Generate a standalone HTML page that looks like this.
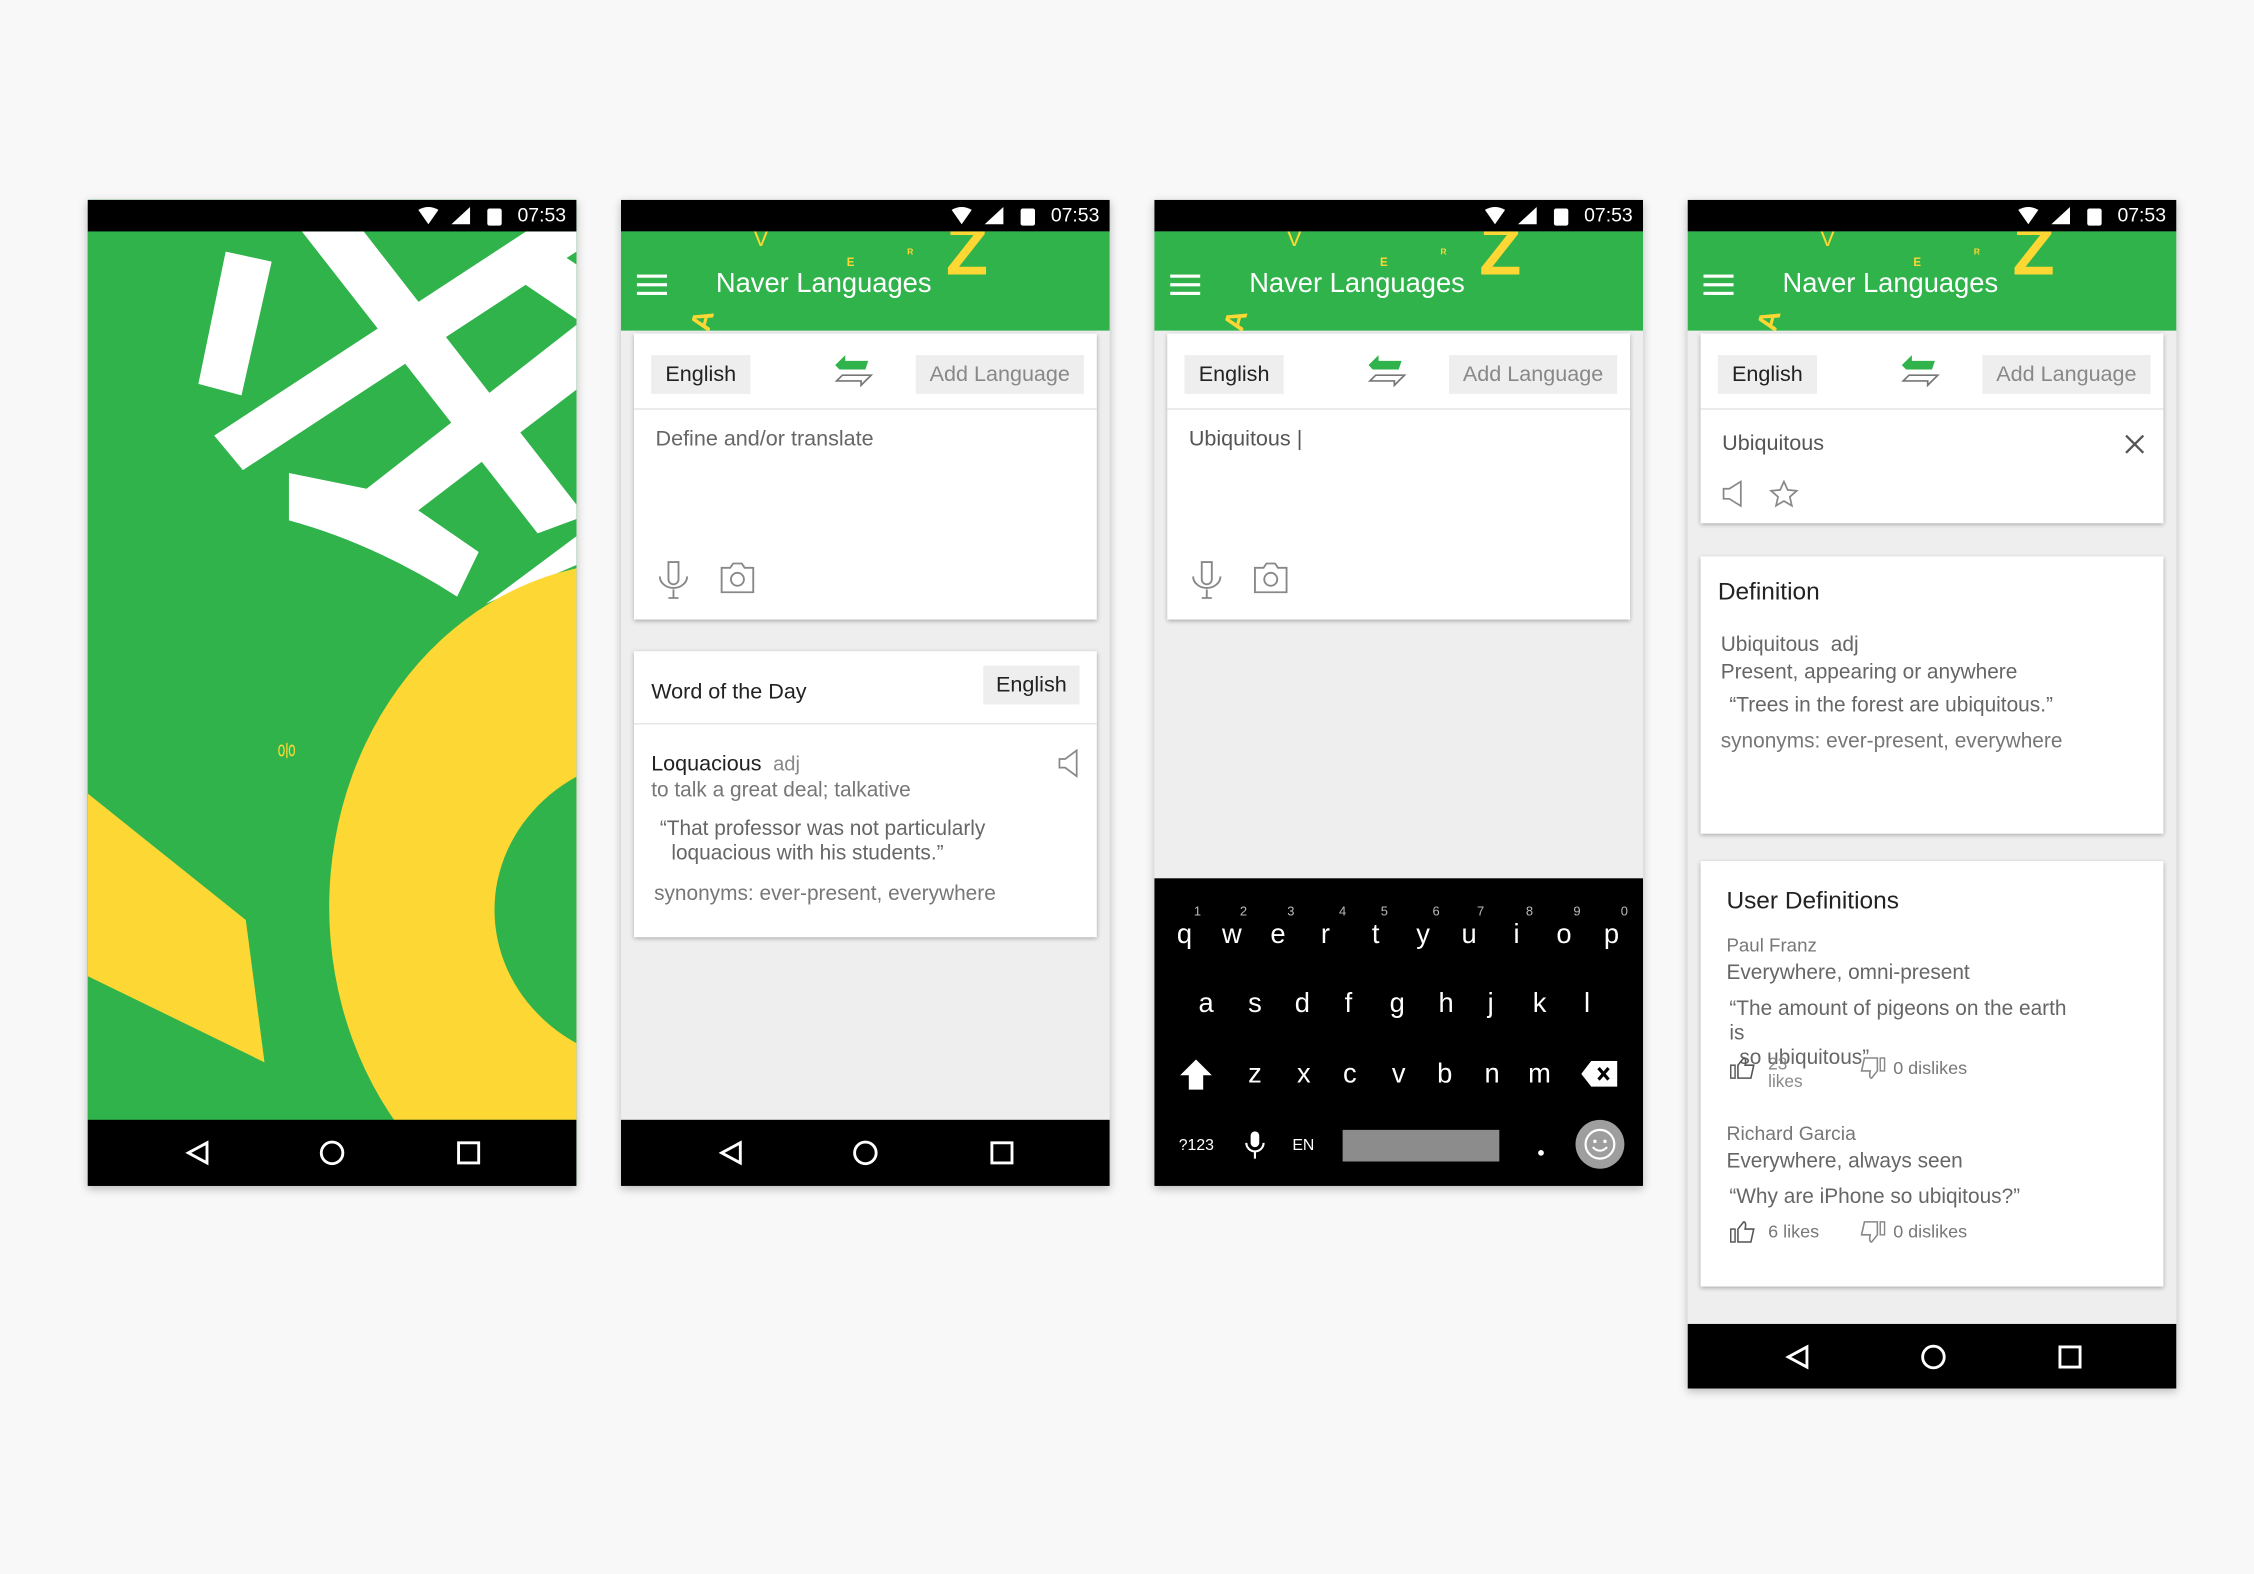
<!DOCTYPE html>
<html><head><meta charset="utf-8">
<style>
*{margin:0;padding:0;box-sizing:border-box}
html,body{width:2254px;height:1574px;overflow:hidden;background:#f8f8f8}
#w{position:absolute;left:0;top:0;width:1568px;height:1095px;transform:scale(1.4375);transform-origin:0 0;font-family:"Liberation Sans","Noto Sans CJK KR",sans-serif}
.ph{position:absolute;top:139px;width:340px;height:686px;background:#eeeeee;overflow:hidden;box-shadow:0 2px 6px rgba(0,0,0,.25)}
.sb{position:absolute;left:0;top:0;width:340px;height:22px;background:#000}
.sb .tm{position:absolute;left:299px;top:3px;color:#fff;font-size:13.5px;line-height:16px}
.nav{position:absolute;left:0;width:340px;height:46px;background:#000}
.hd{position:absolute;left:0;top:22px;width:340px;height:69px;background:#2fb34a;overflow:hidden}
.ttl{position:absolute;left:66px;top:26px;color:#fff;font-size:19px;line-height:22px}
.y{position:absolute;color:#fdd835;font-weight:bold;line-height:1}
.card{position:absolute;left:9px;width:322px;background:#fff;box-shadow:0 1px 3px rgba(0,0,0,.3)}
.chip{position:absolute;height:27px;background:#eeeeee;font-size:15px;line-height:27px;text-align:center;color:#222}
.t{position:absolute;white-space:nowrap;line-height:20px}
.dv{position:absolute;left:0;right:0;height:1px;background:#e4e4e4}
.k{position:absolute;color:#fff;font-size:19px;line-height:20px;width:20px;text-align:center}
.n{position:absolute;color:#bbb;font-size:9px;line-height:10px;width:10px;text-align:center}
.ct{font-size:14.5px}
</style></head><body><div id="w">

<!-- PHONE 1 -->
<div class="ph" style="left:61px;background:#2fb34a">
 <svg style="position:absolute;left:0;top:22px" width="340" height="618" viewBox="0 0 340 618">
  <rect width="340" height="618" fill="#2fb34a"/>
  <polygon fill="#fff" points="96,14 128,21 107,114 77,106"/>
  <polygon fill="#fff" points="88,142 305,0 340,0 340,14 108,166"/>
  <polygon fill="#fff" points="149,0 192,0 340,190 340,200 313,210"/>
  <path fill="#fff" d="M140,168 L194,179 L340,65 L340,110 L230,194 L272,223 L257,254 Q199,217 140,201 Z"/>
  <polygon fill="#fff" points="303,36 331,17 340,23 340,61"/>
  <polygon fill="#fff" points="340,212 340,232 277,259"/>
  <ellipse cx="380" cy="470" rx="212" ry="240" fill="#fdd835"/>
  <ellipse cx="400" cy="472" rx="117" ry="108" fill="#2fb34a"/>
  <polygon fill="#fdd835" points="0,391 110,479 123,578 0,518"/>
  <text x="132" y="366" font-size="13" fill="#fdd835" transform="rotate(-90 138 361)" font-family="Noto Sans CJK KR,sans-serif">응</text>
 </svg>
 <div class="sb"><svg style="position:absolute;left:228px;top:4px" width="64" height="14"><path d="M2,3 Q9,-1 16,3 L9,13Z" fill="#fff"/><path d="M25,13 L38,1 L38,13Z" fill="#fff"/><rect x="50" y="2" width="10" height="12" rx="1.5" fill="#fff"/></svg><div class="tm">07:53</div></div>
 <div class="nav" style="top:640px"><svg width="340" height="46"><path d="M83,16 L70,23 L83,30Z" fill="none" stroke="#fff" stroke-width="2"/><circle cx="170" cy="23" r="7.5" fill="none" stroke="#fff" stroke-width="2"/><rect x="258" y="16" width="14" height="14" fill="none" stroke="#fff" stroke-width="2"/></svg></div>
</div>

<!-- PHONE 2 -->
<div class="ph" style="left:432px">
 <div class="sb"><svg style="position:absolute;left:228px;top:4px" width="64" height="14"><path d="M2,3 Q9,-1 16,3 L9,13Z" fill="#fff"/><path d="M25,13 L38,1 L38,13Z" fill="#fff"/><rect x="50" y="2" width="10" height="12" rx="1.5" fill="#fff"/></svg><div class="tm">07:53</div></div>
 <div class="hd">
  <svg style="position:absolute;left:11px;top:29px" width="21" height="16"><rect y="1" width="21" height="2.2" fill="#fff"/><rect y="7" width="21" height="2.2" fill="#fff"/><rect y="13" width="21" height="2.2" fill="#fff"/></svg>
  <div class="ttl">Naver Languages</div>
  <div class="y" style="left:92px;top:-2px;font-size:16px;font-weight:normal">V</div>
  <div class="y" style="left:157px;top:18px;font-size:8px">E</div>
  <div class="y" style="left:199px;top:12px;font-size:6px">R</div>
  <div class="y" style="left:226px;top:-9px;font-size:48px">Z</div>
  <div class="y" style="left:50px;top:52px;font-size:20px;transform:rotate(-75deg)">A</div>
 </div>
 <div class="card" style="top:93px;height:199px">
  <div class="chip" style="left:12px;top:15px;width:69px">English</div>
  <svg style="position:absolute;left:139px;top:14px" width="28" height="24"><path d="M1,8 L8,1 L8,5 L24,5 L22,11 L4,11Z" fill="#2fb34a"/><path d="M6,15 L26,15 L19,22 L19,19 L2,19Z" fill="none" stroke="#777" stroke-width="1.2"/></svg>
  <div class="chip" style="left:196px;top:15px;width:117px;color:#888">Add Language</div>
  <div class="dv" style="top:52px"></div>
  <div class="t" style="left:15px;top:64px;font-size:15px;color:#666">Define and/or translate</div>
  <svg style="position:absolute;left:16px;top:157px" width="80" height="30"><path d="M8,2 h7 v12 a3.5,3.5 0 0 1 -7,0Z M2,12 a9.5,8 0 0 0 19,0 M11.5,21 v6 M8,27 h7" fill="none" stroke="#888" stroke-width="1.3"/><path d="M45,6 h6 l2,-3 h6 l2,3 h6 v17 h-22Z" fill="none" stroke="#888" stroke-width="1.3"/><circle cx="56" cy="14" r="4.5" fill="none" stroke="#888" stroke-width="1.3"/></svg>
 </div>
 <div class="card" style="top:314px;height:199px">
  <div class="t" style="left:12px;top:19px;font-size:15px;color:#222">Word of the Day</div>
  <div class="chip" style="left:243px;top:10px;width:67px">English</div>
  <div class="dv" style="top:50px"></div>
  <div class="t" style="left:12px;top:68px;font-size:15px;color:#222">Loquacious <span style="color:#888;font-size:14px">&nbsp;adj</span></div>
  <div class="t ct" style="left:12px;top:87px;color:#777">to talk a great deal; talkative</div>
  <div class="t ct" style="left:18px;top:114px;color:#666">“That professor was not particularly</div>
  <div class="t ct" style="left:26px;top:131px;color:#666">loquacious with his students.”</div>
  <div class="t ct" style="left:14px;top:159px;color:#777">synonyms: ever-present, everywhere</div>
  <svg style="position:absolute;left:294px;top:68px" width="16" height="20"><path d="M2,7 h4 l8,-6 v18 l-8,-6 h-4Z" fill="none" stroke="#888" stroke-width="1.2"/></svg>
 </div>
 <div class="nav" style="top:640px"><svg width="340" height="46"><path d="M83,16 L70,23 L83,30Z" fill="none" stroke="#fff" stroke-width="2"/><circle cx="170" cy="23" r="7.5" fill="none" stroke="#fff" stroke-width="2"/><rect x="258" y="16" width="14" height="14" fill="none" stroke="#fff" stroke-width="2"/></svg></div>
</div>

<!-- PHONE 3 -->
<div class="ph" style="left:803px">
 <div class="sb"><svg style="position:absolute;left:228px;top:4px" width="64" height="14"><path d="M2,3 Q9,-1 16,3 L9,13Z" fill="#fff"/><path d="M25,13 L38,1 L38,13Z" fill="#fff"/><rect x="50" y="2" width="10" height="12" rx="1.5" fill="#fff"/></svg><div class="tm">07:53</div></div>
 <div class="hd">
  <svg style="position:absolute;left:11px;top:29px" width="21" height="16"><rect y="1" width="21" height="2.2" fill="#fff"/><rect y="7" width="21" height="2.2" fill="#fff"/><rect y="13" width="21" height="2.2" fill="#fff"/></svg>
  <div class="ttl">Naver Languages</div>
  <div class="y" style="left:92px;top:-2px;font-size:16px;font-weight:normal">V</div>
  <div class="y" style="left:157px;top:18px;font-size:8px">E</div>
  <div class="y" style="left:199px;top:12px;font-size:6px">R</div>
  <div class="y" style="left:226px;top:-9px;font-size:48px">Z</div>
  <div class="y" style="left:50px;top:52px;font-size:20px;transform:rotate(-75deg)">A</div>
 </div>
 <div class="card" style="top:93px;height:199px">
  <div class="chip" style="left:12px;top:15px;width:69px">English</div>
  <svg style="position:absolute;left:139px;top:14px" width="28" height="24"><path d="M1,8 L8,1 L8,5 L24,5 L22,11 L4,11Z" fill="#2fb34a"/><path d="M6,15 L26,15 L19,22 L19,19 L2,19Z" fill="none" stroke="#777" stroke-width="1.2"/></svg>
  <div class="chip" style="left:196px;top:15px;width:117px;color:#888">Add Language</div>
  <div class="dv" style="top:52px"></div>
  <div class="t" style="left:15px;top:64px;font-size:15px;color:#555">Ubiquitous |</div>
  <svg style="position:absolute;left:16px;top:157px" width="80" height="30"><path d="M8,2 h7 v12 a3.5,3.5 0 0 1 -7,0Z M2,12 a9.5,8 0 0 0 19,0 M11.5,21 v6 M8,27 h7" fill="none" stroke="#888" stroke-width="1.3"/><path d="M45,6 h6 l2,-3 h6 l2,3 h6 v17 h-22Z" fill="none" stroke="#888" stroke-width="1.3"/><circle cx="56" cy="14" r="4.5" fill="none" stroke="#888" stroke-width="1.3"/></svg>
 </div>
 <div style="position:absolute;left:0;top:472px;width:340px;height:214px;background:#000">
  <div class="n" style="left:25px;top:18px">1</div><div class="n" style="left:57px;top:18px">2</div><div class="n" style="left:90px;top:18px">3</div><div class="n" style="left:126px;top:18px">4</div><div class="n" style="left:155px;top:18px">5</div><div class="n" style="left:191px;top:18px">6</div><div class="n" style="left:222px;top:18px">7</div><div class="n" style="left:256px;top:18px">8</div><div class="n" style="left:289px;top:18px">9</div><div class="n" style="left:322px;top:18px">0</div>
  <div class="k" style="left:11px;top:30px">q</div><div class="k" style="left:44px;top:30px">w</div><div class="k" style="left:76px;top:30px">e</div><div class="k" style="left:109px;top:30px">r</div><div class="k" style="left:144px;top:30px">t</div><div class="k" style="left:177px;top:30px">y</div><div class="k" style="left:209px;top:30px">u</div><div class="k" style="left:242px;top:30px">i</div><div class="k" style="left:275px;top:30px">o</div><div class="k" style="left:308px;top:30px">p</div>
  <div class="k" style="left:26px;top:78px">a</div><div class="k" style="left:60px;top:78px">s</div><div class="k" style="left:93px;top:78px">d</div><div class="k" style="left:125px;top:78px">f</div><div class="k" style="left:159px;top:78px">g</div><div class="k" style="left:193px;top:78px">h</div><div class="k" style="left:224px;top:78px">j</div><div class="k" style="left:258px;top:78px">k</div><div class="k" style="left:291px;top:78px">l</div>
  <svg style="position:absolute;left:17px;top:125px" width="24" height="24"><path d="M12,1 L23,12 L17,12 L17,22 L7,22 L7,12 L1,12Z" fill="#fff"/></svg>
  <div class="k" style="left:60px;top:127px">z</div><div class="k" style="left:94px;top:127px">x</div><div class="k" style="left:126px;top:127px">c</div><div class="k" style="left:160px;top:127px">v</div><div class="k" style="left:192px;top:127px">b</div><div class="k" style="left:225px;top:127px">n</div><div class="k" style="left:258px;top:127px">m</div>
  <svg style="position:absolute;left:297px;top:127px" width="26" height="18"><path d="M7,0 H25 V18 H7 L0,9Z" fill="#fff"/><path d="M12,5 L19,13 M19,5 L12,13" stroke="#000" stroke-width="2.2"/></svg>
  <div class="t" style="left:17px;top:176px;color:#fff;font-size:11px">?123</div>
  <svg style="position:absolute;left:63px;top:175px" width="14" height="22"><rect x="4" y="1" width="6" height="11" rx="3" fill="#fff"/><path d="M1,9 a6,6 0 0 0 12,0 M7,15 v5" fill="none" stroke="#fff" stroke-width="1.5"/></svg>
  <div class="t" style="left:96px;top:176px;color:#fff;font-size:11px">EN</div>
  <div style="position:absolute;left:131px;top:175px;width:109px;height:22px;background:#8c8c8c"></div>
  <div style="position:absolute;left:267px;top:189px;width:4px;height:4px;border-radius:2px;background:#fff"></div>
  <div style="position:absolute;left:293px;top:168px;width:34px;height:34px;border-radius:17px;background:#9e9e9e"></div>
  <svg style="position:absolute;left:298px;top:173px" width="24" height="24"><circle cx="12" cy="12" r="10" fill="none" stroke="#fff" stroke-width="1.5"/><circle cx="8.5" cy="10" r="1.2" fill="#fff"/><circle cx="15.5" cy="10" r="1.2" fill="#fff"/><path d="M7,14 q5,5 10,0" fill="none" stroke="#fff" stroke-width="1.5"/></svg>
 </div>
</div>

<!-- PHONE 4 -->
<div class="ph" style="left:1174px;height:827px">
 <div class="sb"><svg style="position:absolute;left:228px;top:4px" width="64" height="14"><path d="M2,3 Q9,-1 16,3 L9,13Z" fill="#fff"/><path d="M25,13 L38,1 L38,13Z" fill="#fff"/><rect x="50" y="2" width="10" height="12" rx="1.5" fill="#fff"/></svg><div class="tm">07:53</div></div>
 <div class="hd">
  <svg style="position:absolute;left:11px;top:29px" width="21" height="16"><rect y="1" width="21" height="2.2" fill="#fff"/><rect y="7" width="21" height="2.2" fill="#fff"/><rect y="13" width="21" height="2.2" fill="#fff"/></svg>
  <div class="ttl">Naver Languages</div>
  <div class="y" style="left:92px;top:-2px;font-size:16px;font-weight:normal">V</div>
  <div class="y" style="left:157px;top:18px;font-size:8px">E</div>
  <div class="y" style="left:199px;top:12px;font-size:6px">R</div>
  <div class="y" style="left:226px;top:-9px;font-size:48px">Z</div>
  <div class="y" style="left:50px;top:52px;font-size:20px;transform:rotate(-75deg)">A</div>
 </div>
 <div class="card" style="top:93px;height:132px">
  <div class="chip" style="left:12px;top:15px;width:69px">English</div>
  <svg style="position:absolute;left:139px;top:14px" width="28" height="24"><path d="M1,8 L8,1 L8,5 L24,5 L22,11 L4,11Z" fill="#2fb34a"/><path d="M6,15 L26,15 L19,22 L19,19 L2,19Z" fill="none" stroke="#777" stroke-width="1.2"/></svg>
  <div class="chip" style="left:196px;top:15px;width:117px;color:#888">Add Language</div>
  <div class="dv" style="top:52px"></div>
  <div class="t" style="left:15px;top:67px;font-size:15px;color:#555">Ubiquitous</div>
  <svg style="position:absolute;left:295px;top:70px" width="14" height="14"><path d="M1,1 L13,13 M13,1 L1,13" stroke="#555" stroke-width="1.6"/></svg>
  <svg style="position:absolute;left:14px;top:102px" width="60" height="20"><path d="M2,6 h4 l8,-5 v17 l-8,-5 h-4Z" fill="none" stroke="#888" stroke-width="1.2"/><path d="M44,1 l2.6,5.8 6.3,.6 -4.8,4.2 1.4,6.2 -5.5,-3.3 -5.5,3.3 1.4,-6.2 -4.8,-4.2 6.3,-.6Z" fill="none" stroke="#888" stroke-width="1.2"/></svg>
 </div>
 <div class="card" style="top:248px;height:193px">
  <div class="t" style="left:12px;top:15px;font-size:17px;color:#222">Definition</div>
  <div class="t ct" style="left:14px;top:52px;color:#666">Ubiquitous &nbsp;adj</div>
  <div class="t ct" style="left:14px;top:71px;color:#666">Present, appearing or anywhere</div>
  <div class="t ct" style="left:20px;top:94px;color:#666">“Trees in the forest are ubiquitous.”</div>
  <div class="t ct" style="left:14px;top:119px;color:#777">synonyms: ever-present, everywhere</div>
 </div>
 <div class="card" style="top:460px;height:296px">
  <div class="t" style="left:18px;top:18px;font-size:17px;color:#222">User Definitions</div>
  <div class="t" style="left:18px;top:49px;font-size:13px;color:#777">Paul Franz</div>
  <div class="t ct" style="left:18px;top:68px;color:#666">Everywhere, omni-present</div>
  <div class="t ct" style="left:20px;top:93px;color:#666">“The amount of pigeons on the earth</div>
  <div class="t ct" style="left:20px;top:110px;color:#666">is</div>
  <div class="t ct" style="left:27px;top:127px;color:#666">so ubiquitous”</div>
  <svg style="position:absolute;left:20px;top:136px" width="20" height="16"><rect x="1" y="6" width="3" height="9" fill="none" stroke="#555" stroke-width="1"/><path d="M6,6 L10,1 Q12,1 11,6 H17 L15,15 H6Z" fill="none" stroke="#555" stroke-width="1.1"/></svg>
  <div class="t" style="left:47px;top:135px;font-size:12px;color:#888;line-height:12px">23<br>likes</div>
  <svg style="position:absolute;left:110px;top:136px" width="20" height="16"><rect x="15" y="1" width="3" height="9" fill="none" stroke="#888" stroke-width="1"/><path d="M13,10 L9,15 Q7,15 8,10 H2 L4,1 H13Z" fill="none" stroke="#888" stroke-width="1.1"/></svg>
  <div class="t" style="left:134px;top:134px;font-size:12.5px;color:#777">0 dislikes</div>
  <div class="t" style="left:18px;top:180px;font-size:13.5px;color:#777">Richard Garcia</div>
  <div class="t ct" style="left:18px;top:199px;color:#666">Everywhere, always seen</div>
  <div class="t ct" style="left:20px;top:224px;color:#666">“Why are iPhone so ubiqitous?”</div>
  <svg style="position:absolute;left:20px;top:250px" width="20" height="16"><rect x="1" y="6" width="3" height="9" fill="none" stroke="#555" stroke-width="1"/><path d="M6,6 L10,1 Q12,1 11,6 H17 L15,15 H6Z" fill="none" stroke="#555" stroke-width="1.1"/></svg>
  <div class="t" style="left:47px;top:248px;font-size:12.5px;color:#777">6 likes</div>
  <svg style="position:absolute;left:110px;top:250px" width="20" height="16"><rect x="15" y="1" width="3" height="9" fill="none" stroke="#888" stroke-width="1"/><path d="M13,10 L9,15 Q7,15 8,10 H2 L4,1 H13Z" fill="none" stroke="#888" stroke-width="1.1"/></svg>
  <div class="t" style="left:134px;top:248px;font-size:12.5px;color:#777">0 dislikes</div>
 </div>
 <div class="nav" style="top:782px;height:45px"><svg width="340" height="45"><path d="M83,16 L70,23 L83,30Z" fill="none" stroke="#fff" stroke-width="2"/><circle cx="171" cy="23" r="7.5" fill="none" stroke="#fff" stroke-width="2"/><rect x="259" y="16" width="14" height="14" fill="none" stroke="#fff" stroke-width="2"/></svg></div>
</div>

</div></body></html>
